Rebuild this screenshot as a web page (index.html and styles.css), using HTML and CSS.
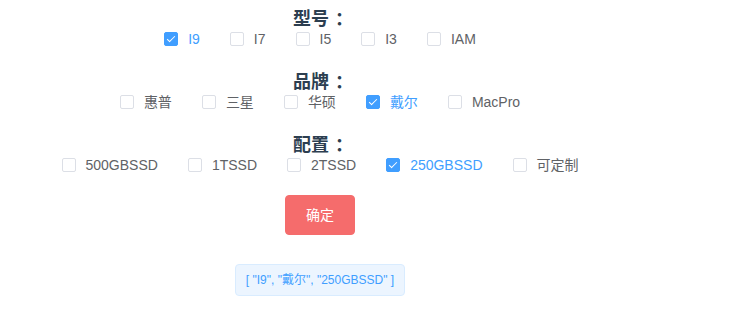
FILE: index.html
```html
<!DOCTYPE html>
<html lang="zh">
<head>
<meta charset="utf-8">
<title>选择</title>
<link rel="stylesheet" href="styles.css">
</head>
<body>
<div class="app">
  <section class="group">
    <h3 class="title">型号<span class="colon">：</span></h3>
    <div class="checks">
      <label class="check is-checked"><span class="box"></span><span class="text">I9</span></label>
      <label class="check"><span class="box"></span><span class="text">I7</span></label>
      <label class="check"><span class="box"></span><span class="text">I5</span></label>
      <label class="check"><span class="box"></span><span class="text">I3</span></label>
      <label class="check"><span class="box"></span><span class="text">IAM</span></label>
    </div>
  </section>
  <section class="group">
    <h3 class="title">品牌<span class="colon">：</span></h3>
    <div class="checks">
      <label class="check"><span class="box"></span><span class="text">惠普</span></label>
      <label class="check"><span class="box"></span><span class="text">三星</span></label>
      <label class="check"><span class="box"></span><span class="text">华硕</span></label>
      <label class="check is-checked"><span class="box"></span><span class="text">戴尔</span></label>
      <label class="check"><span class="box"></span><span class="text">MacPro</span></label>
    </div>
  </section>
  <section class="group">
    <h3 class="title">配置<span class="colon">：</span></h3>
    <div class="checks">
      <label class="check"><span class="box"></span><span class="text">500GBSSD</span></label>
      <label class="check"><span class="box"></span><span class="text">1TSSD</span></label>
      <label class="check"><span class="box"></span><span class="text">2TSSD</span></label>
      <label class="check is-checked"><span class="box"></span><span class="text">250GBSSD</span></label>
      <label class="check"><span class="box"></span><span class="text">可定制</span></label>
    </div>
  </section>
  <div class="actions">
    <button class="btn-danger" type="button">确定</button>
  </div>
  <div class="result">
    <span class="tag">[ "I9", "戴尔", "250GBSSD" ]</span>
  </div>
</div>
</body>
</html>
```

FILE: styles.css
```css
html, body {
  margin: 0;
  padding: 0;
  background: #fff;
}

body {
  font-family: "Liberation Sans", Arial, "Noto Sans CJK SC", sans-serif;
}

.app {
  width: 640px;
  padding-top: 9px;
  text-align: center;
  color: #2c3e50;
}

.group {
  margin-bottom: 23px;
}

.group:last-of-type {
  margin-bottom: 0;
}

.title {
  margin: 0;
  height: 20px;
  font-size: 18px;
  line-height: 20px;
  font-weight: bold;
  color: #2c3e50;
}

.colon {
  display: inline-block;
  transform: translateX(6px);
}

.checks {
  display: flex;
  justify-content: center;
  align-items: center;
  height: 20px;
}

.check {
  display: inline-flex;
  align-items: center;
  margin-right: 30px;
  font-size: 14px;
  line-height: 20px;
  color: #606266;
  cursor: pointer;
}

.check:last-child {
  margin-right: 0;
}

.box {
  position: relative;
  box-sizing: border-box;
  width: 14px;
  height: 14px;
  border: 1px solid #dcdfe6;
  border-radius: 2px;
  background: #fff;
}

.text {
  padding-left: 10px;
}

.is-checked .box {
  background: #409eff;
  border-color: #409eff;
}

.is-checked .box::after {
  content: "";
  position: absolute;
  box-sizing: content-box;
  left: 4px;
  top: 1px;
  width: 3px;
  height: 7px;
  border: 1px solid #fff;
  border-left: 0;
  border-top: 0;
  transform: rotate(45deg);
}

.is-checked .text {
  color: #409eff;
}

.actions {
  margin-top: 20px;
}

.btn-danger {
  box-sizing: border-box;
  height: 40px;
  padding: 12px 20px;
  font-family: inherit;
  font-size: 14px;
  line-height: 14px;
  color: #fff;
  background: #f56c6c;
  border: 1px solid #f56c6c;
  border-radius: 4px;
  cursor: pointer;
}

.result {
  margin-top: 29px;
}

.tag {
  display: inline-block;
  box-sizing: border-box;
  height: 32px;
  padding: 0 10px;
  line-height: 30px;
  font-size: 12px;
  color: #409eff;
  background: #ecf5ff;
  border: 1px solid #d9ecff;
  border-radius: 4px;
  white-space: nowrap;
}
```
